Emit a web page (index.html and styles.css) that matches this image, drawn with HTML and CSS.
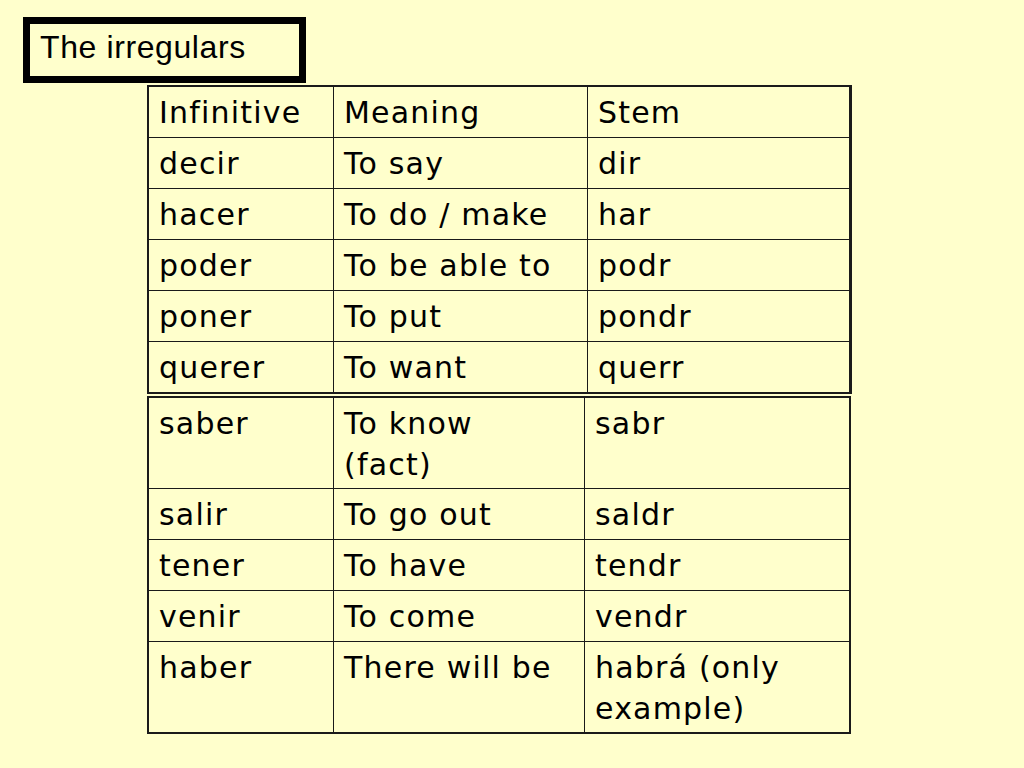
FILE: index.html
```html
<!DOCTYPE html>
<html lang="en">
<head>
<meta charset="utf-8">
<title>The irregulars</title>
<link rel="stylesheet" href="styles.css">
</head>
<body>
<div class="slide">
  <div class="title-box">The irregulars</div>
  <table class="verbs verbs-a">
    <colgroup><col class="c1"><col class="c2"><col class="c3"></colgroup>
    <tr><td>Infinitive</td><td>Meaning</td><td>Stem</td></tr>
    <tr><td>decir</td><td>To say</td><td>dir</td></tr>
    <tr><td>hacer</td><td>To do / make</td><td>har</td></tr>
    <tr><td>poder</td><td>To be able to</td><td>podr</td></tr>
    <tr><td>poner</td><td>To put</td><td>pondr</td></tr>
    <tr><td>querer</td><td>To want</td><td>querr</td></tr>
  </table>
  <table class="verbs verbs-b">
    <colgroup><col class="c1"><col class="c2b"><col class="c3b"></colgroup>
    <tr><td>saber</td><td>To know<br>(fact)</td><td>sabr</td></tr>
    <tr><td>salir</td><td>To go out</td><td>saldr</td></tr>
    <tr><td>tener</td><td>To have</td><td>tendr</td></tr>
    <tr><td>venir</td><td>To come</td><td>vendr</td></tr>
    <tr><td>haber</td><td>There will be</td><td>habrá (only<br>example)</td></tr>
  </table>
</div>
</body>
</html>
```

FILE: styles.css
```css
html, body {
  margin: 0;
  padding: 0;
  background: #ffffcc;
}

.slide {
  width: 1024px;
  height: 768px;
  box-sizing: border-box;
  padding: 17px 0 0 23px;
  background: #ffffcc;
}

.title-box {
  box-sizing: border-box;
  width: 283px;
  height: 66px;
  border: 7px solid #000;
  background: #ffffcc;
  padding: 3px 0 0 10px;
  font-family: "Liberation Sans", Arial, sans-serif;
  font-size: 32px;
  line-height: 40px;
  letter-spacing: 0.6px;
  color: #000;
}

.verbs {
  border-collapse: separate;
  border-spacing: 0;
  table-layout: fixed;
  margin-left: 124px;
  margin-top: 2px;
  border-style: solid;
  border-color: #1a1a1a;
  font-family: "DejaVu Sans", Verdana, sans-serif;
  font-size: 30px;
  letter-spacing: 1.2px;
  color: #000;
}

.verbs-a {
  border-width: 2px 3px 2px 2px;
  width: 705px;
}

.verbs-b {
  border-width: 2px 2px 2px 2px;
  width: 704px;
}

.c1 { width: 185px; }
.c2 { width: 254px; }
.c3 { width: 261px; }
.c2b { width: 251px; }
.c3b { width: 264px; }

.verbs td {
  box-sizing: border-box;
  padding: 5px 0 4px 10px;
  line-height: 41px;
  vertical-align: top;
  white-space: nowrap;
  border-right: 1px solid #1a1a1a;
  border-bottom: 1px solid #1a1a1a;
}

.verbs td:last-child {
  border-right: none;
}

.verbs tr:last-child td {
  border-bottom: none;
}

.verbs-b tr:first-child td,
.verbs-b tr:last-child td {
  padding-bottom: 3px;
}
```
